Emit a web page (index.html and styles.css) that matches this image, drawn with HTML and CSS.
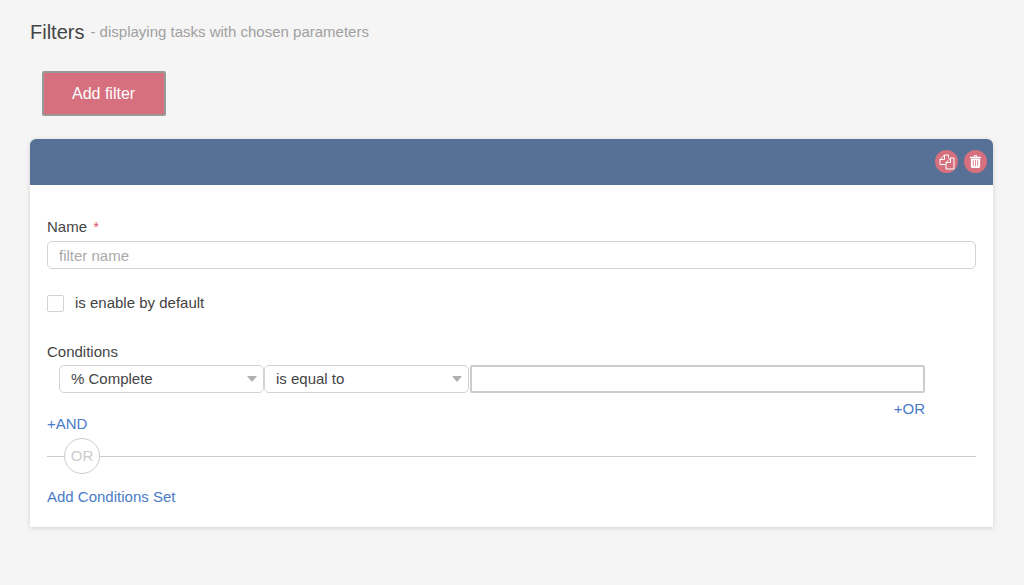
FILE: index.html
```
<!DOCTYPE html>
<html lang="en">
<head>
  <meta charset="UTF-8">
  <meta name="viewport" content="width=device-width, initial-scale=1.0">
  <title>Filters</title>
  <link rel="stylesheet" href="styles.css">
</head>
<body>
  <main class="page">
    <div class="page-header">
      <h1>Filters</h1>
      <span class="subtitle">- displaying tasks with chosen parameters</span>
    </div>
    <button type="button" class="btn-add">Add filter</button>

    <form class="filter-card">
      <div class="filter-header">
        <button type="button" class="btn-icon" aria-label="Copy filter">
          <svg class="icon-copy" viewBox="0 0 16 16"><path d="M6.500 10.500h-5.500V5.500L5.500 1h4v3M5.500 1v4.500H1M11 4h4v11H7V8.500L11.500 4v4.500H7"/></svg>
        </button>
        <button type="button" class="btn-icon" aria-label="Delete filter">
          <svg class="icon-trash" viewBox="0 0 12 14"><path fill-rule="evenodd" d="M4 2l.5-1.3Q4.700 0 5.300 0h1.400q.6 0 .8.700L8 2h3.500q.5 0 .5.500V3.500H0V2.500Q0 2 .5 2zM5 2h2l-.3-1H5.300zM1 4h10v8.400Q11 14 9.700 14H2.300Q1 14 1 12.400zM3.200 5.500v6.500h.8V5.500zM5.600 5.500v6.500h.8V5.500zM8 5.500v6.500h.8V5.500z"/></svg>
        </button>
      </div>

      <div class="filter-body">
        <div class="form-field">
          <label for="filter-name">Name <span class="required">*</span></label>
          <input type="text" id="filter-name" name="name" class="form-control" placeholder="filter name">
        </div>

        <div class="form-check">
          <input type="checkbox" id="enabled" name="enabled">
          <label for="enabled">is enable by default</label>
        </div>

        <fieldset class="conditions">
          <legend>Conditions</legend>
          <div class="condition-row">
            <select class="form-control" name="field" aria-label="Field">
              <option>% Complete</option>
            </select>
            <select class="form-control" name="operator" aria-label="Operator">
              <option>is equal to</option>
            </select>
            <input type="text" class="condition-value" name="value" aria-label="Value">
          </div>
          <div class="condition-or"><a href="#">+OR</a></div>
          <div class="condition-and"><a href="#">+AND</a></div>
        </fieldset>

        <div class="separator"><span>OR</span></div>
        <div class="add-set"><a href="#">Add Conditions Set</a></div>
      </div>
    </form>
  </main>
</body>
</html>
```
FILE: styles.css
```
* { box-sizing: border-box; }
body {
  margin: 0;
  background: #f5f5f5;
  color: #444;
  font-family: "Liberation Sans", Arial, sans-serif;
  font-size: 15px;
  line-height: 18px;
}
button, input, select { font: inherit; color: inherit; }
a { color: #4a7bc8; text-decoration: none; }
a:hover { text-decoration: underline; }

.page { padding: 20px 31px 32px 30px; }
.page-header { display: flex; align-items: center; gap: 6px; line-height: 24px; }
.page-header h1 { margin: 0; font-size: 20px; font-weight: normal; }
.subtitle { color: #a0a0a0; }
.btn-add {
  display: block;
  margin: 27px 0 23px 12px;
  padding: 12px 29px 11px 28px;
  border: 2px solid #999;
  border-radius: 2px;
  background: #d6707f;
  color: #fff;
  font-size: 16px;
  cursor: pointer;
}

/* Card */
.filter-card { background: #fff; border-radius: 6px 6px 0 0; box-shadow: 0 1px 5px rgba(0, 0, 0, 0.15); }
.filter-header {
  display: flex;
  justify-content: flex-end;
  align-items: center;
  gap: 6px;
  padding: 11px 6px 12px;
  border-radius: 6px 6px 0 0;
  background: #577196;
}
.btn-icon {
  display: flex;
  justify-content: center;
  align-items: center;
  width: 23px;
  height: 23px;
  padding: 0;
  border: none;
  border-radius: 50%;
  background: #d6707f;
  cursor: pointer;
}
.icon-copy { width: 16px; height: 16px; fill: none; stroke: #fff; stroke-linejoin: round; }
.icon-trash { width: 13px; height: 13px; fill: #fff; }
.filter-body { padding: 33px 17px 23px; }

/* Fields */
.form-field label { display: block; margin-bottom: 5px; }
.required { margin-left: 2px; color: #dd5c70; }
.form-control {
  width: 100%;
  height: 28px;
  padding: 0 11px;
  border: 1px solid #d2d2d2;
  border-radius: 5px;
  background: #fff;
}
.form-control::placeholder { color: #aaa; }
.form-check { display: flex; align-items: center; gap: 11px; margin-top: 25px; }
.form-check input {
  appearance: none;
  width: 17px;
  height: 17px;
  margin: 0;
  border: 1px solid #d2d2d2;
  border-radius: 2px;
}
.form-check input:checked { background: #577196; }

/* Conditions */
.conditions { min-width: 0; margin: 31px 0 0; padding: 0; border: none; }
.conditions legend { margin-bottom: 4px; padding: 0; }
.condition-row {
  display: grid;
  grid-template-columns: 205px 205px 1fr;
  margin: 0 51px 0 12px;
}
.condition-row select {
  appearance: none;
  background: #fff url("data:image/svg+xml,%3Csvg xmlns='http://www.w3.org/2000/svg' width='10' height='6'%3E%3Cpath d='M0 0h10L5 6z' fill='%23b0b0b0'/%3E%3C/svg%3E") no-repeat right 6px center;
}
.condition-value {
  min-width: 0;
  height: 28px;
  margin-left: 1px;
  padding: 0 8px;
  border: 2px solid #ccc;
  border-radius: 2px;
}
.condition-or, .condition-and, .add-set { line-height: 15px; }
.condition-or { margin: 8px 51px 0 0; text-align: right; }
.separator { display: flex; align-items: center; margin-top: 7px; }
.separator::before, .separator::after { content: ""; height: 1px; background: #ccc; }
.separator::before { width: 17px; }
.separator::after { flex: 1; }
.separator span {
  width: 36px;
  border: 1px solid #ccc;
  border-radius: 50%;
  color: #ccc;
  line-height: 34px;
  text-align: center;
}
.add-set { margin-top: 15px; }
```
